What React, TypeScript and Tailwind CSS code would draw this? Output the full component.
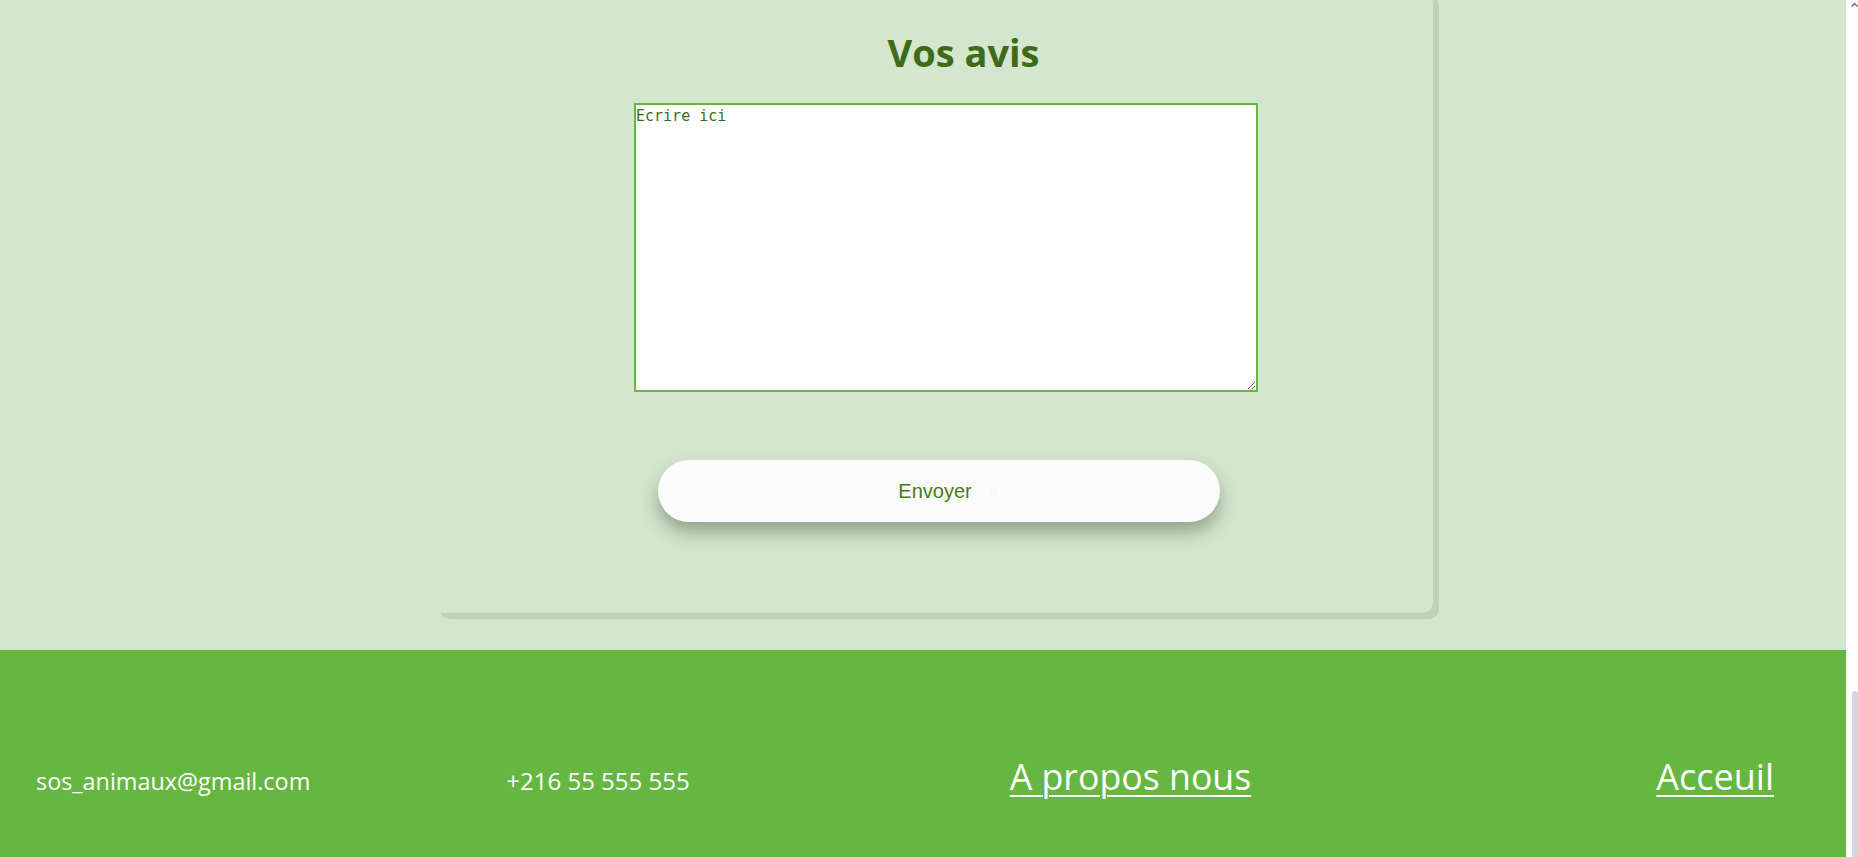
import React from 'react';

// Feedback section ("Vos avis") with contact footer

function FakeScrollbar() {
  return (
    <div className="w-[12px] shrink-0 bg-white flex flex-col items-end">
      <svg className="mt-[2px]" width="7" height="6" viewBox="0 0 7 6">
        <path d="M0.5 4.5 L3.5 1.5 L6.5 4.5" fill="none" stroke="#6b6b6b" strokeWidth="1.4" />
      </svg>
      <div className="flex-1" />
      <div className="w-[6px] h-[166px] rounded-t-[3px] bg-[#cfd8df]" />
    </div>
  );
}

export default function App() {
  return (
    <div className="flex h-[857px] w-full overflow-hidden" style={{ fontFamily: '"Open Sans", "Noto Sans", sans-serif' }}>
      <div className="flex-1 flex flex-col min-w-0">
        {/* Review card */}
        <section className="h-[650px] shrink-0 bg-[#d4e6ce]">
          <div className="ml-[434px] mt-[-10px] w-[999px] rounded-[10px] bg-[#d4e6ce] shadow-[6px_6px_0_#bed2b7] pt-[43px] pb-[91px]">
            <h2 className="pl-[60px] text-center text-[38px] leading-none font-bold text-[#3e6b16]">
              Vos avis
            </h2>
            <textarea
              className="block mt-[32px] ml-[200px] w-[624px] h-[289px] border-2 border-[#66b742] bg-white p-0 text-[15px] text-[#3e6b16] placeholder:text-[#3e6b16] placeholder:opacity-100 outline-none"
              style={{ fontFamily: '"DejaVu Sans Mono", "Liberation Mono", monospace' }}
              placeholder="Ecrire ici"
            />
            <button
              className="mt-[68px] ml-[224px] w-[562px] h-[62px] pr-[8px] rounded-full bg-[#fbfbfb] shadow-[0_10px_18px_rgba(40,60,30,0.38)] flex items-center justify-center text-[20px] text-[#4a7a1c]"
              style={{ fontFamily: '"Liberation Sans", Arial, sans-serif' }}
            >
              <span className="relative">
                Envoyer
                <span className="absolute left-[calc(100%+16px)] top-0 text-[#f5f6f4]">»</span>
              </span>
            </button>
          </div>
        </section>

        {/* Footer */}
        <footer className="flex-1 bg-[#66b742] text-white">
          <div className="flex items-baseline pt-[109px] leading-none">
            <span className="ml-[36px] text-[23.4px]">sos_animaux@gmail.com</span>
            <span className="ml-[196px] text-[24px]">+216 55 555 555</span>
            <a href="#" className="ml-[320px] text-[35.7px] underline decoration-2 underline-offset-[5px]">
              A propos nous
            </a>
            <a href="#" className="ml-[405px] text-[36px] underline decoration-2 underline-offset-[5px]">
              Acceuil
            </a>
          </div>
        </footer>
      </div>
      <FakeScrollbar />
    </div>
  );
}
